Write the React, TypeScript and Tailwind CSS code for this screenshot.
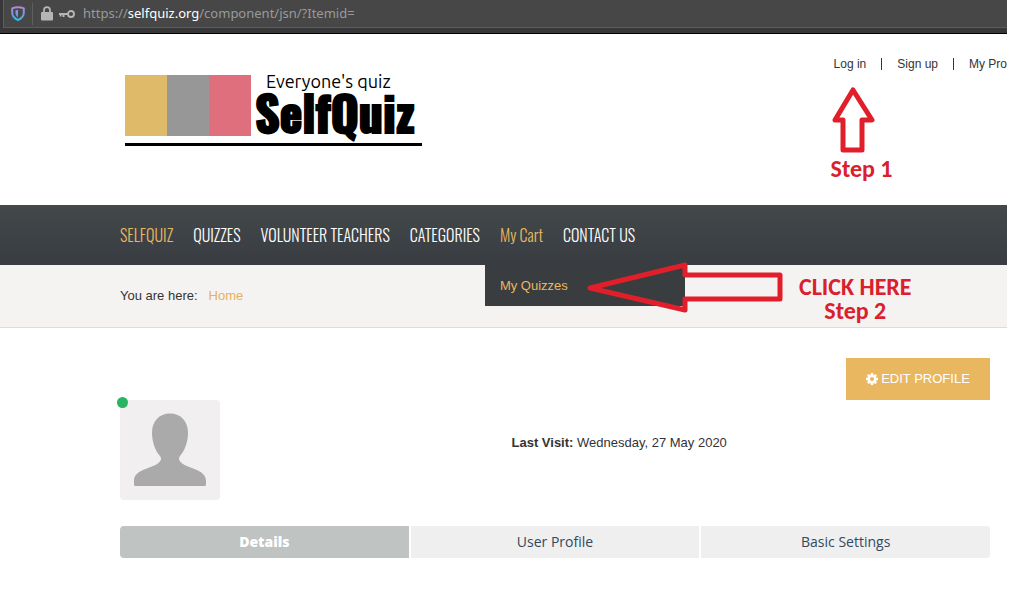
const navItems = [
  { label: "SELFQUIZ", active: true },
  { label: "QUIZZES" },
  { label: "VOLUNTEER TEACHERS" },
  { label: "CATEGORIES" },
  { label: "My Cart", active: true, submenu: "My Quizzes" },
  { label: "CONTACT US" },
];

const tabs = ["Details", "User Profile", "Basic Settings"];

const AddressBar = () => (
  <div className="border-b border-black bg-[#38383b] pb-[5px] pl-[3px]">
    <div className="flex h-7 items-center border-b border-l border-[#5c5c5e] bg-[#474747]">
      <svg className="ml-[7px] h-[15px] w-[14px]" viewBox="0 0 14 15" fill="none">
        <defs>
          <linearGradient id="shield" x1="0" y1="0" x2="0" y2="1">
            <stop offset="0" stopColor="#b287d8" />
            <stop offset="0.5" stopColor="#6f9be0" />
            <stop offset="1" stopColor="#35b4e6" />
          </linearGradient>
        </defs>
        <path
          d="M7 1.200C9 1.200 11 1.600 12.800 2.400V6.500C12.800 10 10.400 12.600 7 14 3.600 12.600 1.200 10 1.200 6.500V2.400C3 1.600 5 1.200 7 1.200Z"
          stroke="url(#shield)"
          strokeWidth="2"
          strokeLinejoin="round"
        />
        <path d="M7 4 4.500 4.300V6.800C4.500 8.800 5.500 10.300 7 11.300Z" fill="url(#shield)" />
      </svg>
      <div className="ml-[7px] h-[22px] w-px bg-[#5f5f5f]" />
      <svg className="ml-2 h-[15px] w-3" viewBox="0 0 12 15">
        <path d="M3 7V4.200a3 3 0 0 1 6 0V7" fill="none" stroke="#b5b5b5" strokeWidth="1.800" />
        <rect x="0" y="6" width="12" height="8.500" rx="1" fill="#b5b5b5" />
      </svg>
      <svg className="ml-1.5 h-[10px] w-4" viewBox="0 0 16 10">
        <circle cx="12" cy="5" r="3" fill="none" stroke="#b5b5b5" strokeWidth="1.900" />
        <path d="M0 4h9v2H7v0H5.500V8H3.500V6H2.500V7.500H0.800V6H0Z" fill="#b5b5b5" />
      </svg>
      <div className="ml-2 font-['Noto_Sans',sans-serif] text-[13px] text-[#9a9a9a]">
        https://<span className="text-white">selfquiz.org</span>/component/jsn/?Itemid=
      </div>
    </div>
  </div>
);

const Logo = () => (
  <svg className="h-[76px] w-[297px] overflow-visible" viewBox="0 0 297 76" role="img" aria-label="SelfQuiz">
    <rect x="0" y="3" width="42" height="61" fill="#dfba69" />
    <rect x="42" y="3" width="42" height="61" fill="#979797" />
    <rect x="84" y="3" width="42" height="61" fill="#df6f7c" />
    <text x="141" y="16" fontSize="18" className="font-['Ubuntu','DejaVu_Sans',sans-serif]">
      Everyone's quiz
    </text>
    <text
      x="130"
      y="61"
      fontSize="48"
      stroke="black"
      strokeWidth="2"
      className="font-['Oswald','Roboto_Condensed',sans-serif] font-bold"
    >
      SelfQuiz
    </text>
    <rect x="0" y="71" width="297" height="3" />
  </svg>
);

const Header = () => (
  <header className="flex justify-between pl-[125px]">
    <div className="pt-[38px] pb-[57px]">
      <Logo />
    </div>
    <div className="relative pt-[22px]">
      <div className="flex items-center text-xs">
        <a href="#" className="pr-[15px]">Log in</a>
        <a href="#" className="border-l border-[#333] px-[15px] leading-3">Sign up</a>
        <a href="#" className="border-l border-[#333] pl-[15px] leading-3">My Pro</a>
      </div>
      <div className="absolute top-[51px] -left-[3px] text-[#d9202c]">
        <svg className="h-[68px] w-11" viewBox="0 0 44 68" fill="none" stroke="#e01f2b" strokeWidth="5" strokeLinejoin="round">
          <path d="M22 5 41 35H31V65H12V35H4Z" />
        </svg>
        <p className="mt-1 font-['Carlito','Lato',sans-serif] text-2xl leading-6 font-bold whitespace-nowrap">Step 1</p>
      </div>
    </div>
  </header>
);

const Nav = () => (
  <nav className="relative z-10 bg-linear-to-b from-[#43484a] to-[#393d42] pl-[120px]">
    <ul className="flex gap-5 font-['Oswald','Roboto_Condensed','Liberation_Sans_Narrow',sans-serif] text-base leading-[60px] font-light">
      {navItems.map((item) => (
        <li key={item.label} className="relative whitespace-nowrap">
          <a href="#" className={item.active ? "text-[#e8b860]" : "text-white"}>
            {item.label}
          </a>
          {item.submenu && (
            <div className="absolute top-full -left-[15px] w-[200px] bg-[#393d40] px-[15px] font-['Liberation_Sans',sans-serif] text-[13px] leading-[41px] font-normal">
              <a href="#" className="text-[#e8b860]">{item.submenu}</a>
            </div>
          )}
        </li>
      ))}
    </ul>
  </nav>
);

const Breadcrumb = () => (
  <div className="relative flex gap-[11px] border-b border-[#dcdcdc] bg-[#f4f3f2] pl-[120px] text-[13px] leading-[62px]">
    <span>You are here:</span>
    <a href="#" className="text-[#e8b05c]">Home</a>
    <div className="absolute -top-[4px] left-[587px] z-20 flex items-start text-[#d9202c]">
      <svg className="h-[52px] w-[196px]" viewBox="0 0 196 52" fill="none" stroke="#e01f2b" strokeWidth="5" strokeLinejoin="round">
        <path d="M3 27 98 4V14H193V38H98V49Z" />
      </svg>
      <p className="ml-4 pt-3.5 text-center font-['Carlito','Lato',sans-serif] text-2xl leading-6 font-bold whitespace-nowrap">
        CLICK HERE
        <br />
        Step 2
      </p>
    </div>
  </div>
);

const CogIcon = () => (
  <svg className="size-3" viewBox="0 128 1536 1536" fill="currentColor">
    <path d="M1024 896q0-106-75-181t-181-75-181 75-75 181 75 181 181 75 181-75 75-181zm512-109v222q0 12-8 23t-20 13l-185 28q-19 54-39 91 35 50 107 138 10 12 10 25t-9 23q-27 37-99 108t-94 71q-12 0-26-9l-138-108q-44 23-91 38-16 136-29 186-7 28-36 28h-222q-14 0-24.500-8.500t-11.500-21.500l-28-184q-49-16-90-37l-141 107q-10 9-25 9-14 0-25-11-126-114-165-168-7-10-7-23 0-12 8-23 15-21 51-66.500t54-70.500q-27-50-41-99l-183-27q-13-2-21-12.500t-8-23.500v-222q0-12 8-23t19-13l186-28q14-46 39-92-40-57-107-138-10-12-10-24 0-10 9-23 26-36 98.500-107.500t94.500-71.500q13 0 26 10l138 107q44-23 91-38 16-136 29-186 7-28 36-28h222q14 0 24.500 8.500t11.500 21.500l28 184q49 16 90 37l142-107q9-9 24-9 13 0 25 10 129 119 165 170 7 8 7 22 0 12-8 23-15 21-51 66.500t-54 70.500q26 50 41 98l183 28q13 2 21 12.500t8 23.500z" />
  </svg>
);

const Profile = () => (
  <main className="pt-[30px] pr-[17px] pl-[120px]">
    <div className="flex justify-end">
      <button className="flex h-[42px] w-36 items-center justify-center gap-[3px] bg-[#e9b760] text-[13px] text-white">
        <CogIcon />
        EDIT PROFILE
      </button>
    </div>
    <div className="flex">
      <div className="relative w-[45%] shrink-0">
        <svg className="size-[100px] rounded bg-[#f1eff0]" viewBox="0 0 100 100">
          <path
            d="M50 13.500C39 13.500 32 21.500 32 32.500C32 42 35 50 40 56C42 58.500 41 61.500 37 64C29 69 14 70 14 81V84.500Q14 86 15.500 86H84.500Q86 86 86 84.500V81C86 70 71 69 63 64C59 61.500 58 58.500 60 56C65 50 68 42 68 32.500C68 21.500 61 13.500 50 13.500Z"
            fill="#a9aaa9"
          />
        </svg>
        <span className="absolute -top-[3px] -left-[3px] size-[11px] rounded-full bg-[#27b561]" />
      </div>
      <p className="pt-[33px] text-[13px] leading-5">
        <strong>Last Visit:</strong> Wednesday, 27 May 2020
      </p>
    </div>
    <div role="tablist" className="mt-[26px] flex gap-0.5 overflow-hidden rounded font-['Open_Sans',sans-serif] text-sm">
      {tabs.map((tab, i) => (
        <button
          key={tab}
          role="tab"
          aria-selected={i === 0}
          className={
            i === 0
              ? "h-8 flex-1 bg-[#bfc3c2] font-extrabold text-white"
              : "h-8 flex-1 bg-[#efefef] text-[#34495e]"
          }
        >
          {tab}
        </button>
      ))}
    </div>
  </main>
);

const App = () => {
  return (
    <div className="min-h-screen bg-white pr-[9px] font-['Liberation_Sans',sans-serif] text-[#333]">
      <AddressBar />
      <Header />
      <Nav />
      <Breadcrumb />
      <Profile />
    </div>
  );
};

export default App;
